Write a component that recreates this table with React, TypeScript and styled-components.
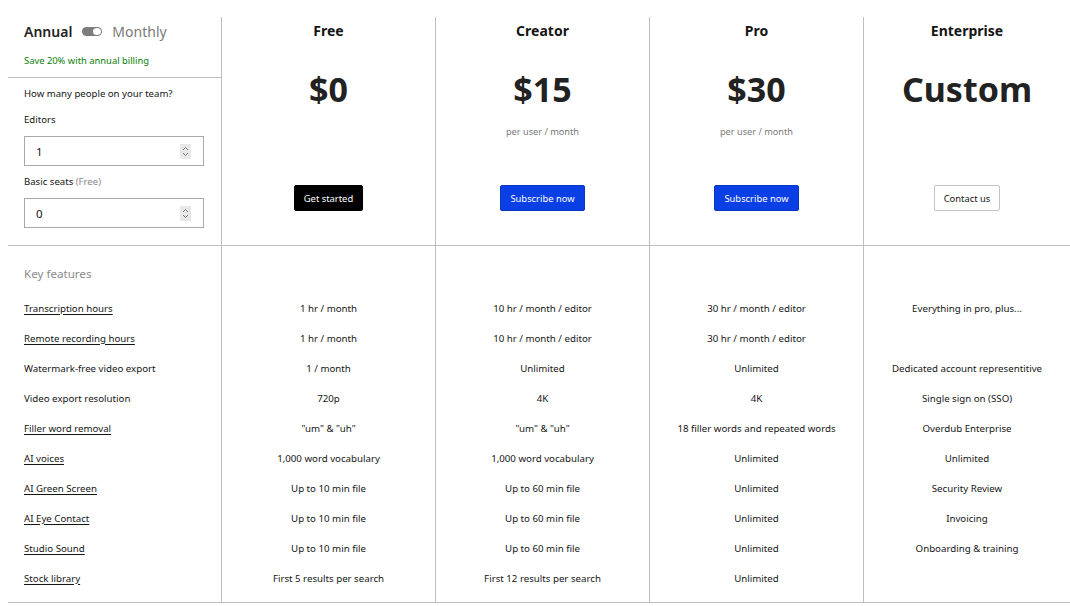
import { FunctionComponent } from 'react';
import styled, { createGlobalStyle } from 'styled-components';

const GlobalStyle = createGlobalStyle`
  * { box-sizing: border-box; }
  body {
    margin: 0;
    background: #ffffff;
    font-family: "Noto Sans", "Open Sans", sans-serif;
    color: #151515;
  }
`;

const Page = styled.div`
  padding: 17px 0 0 8px;
`;

const Table = styled.div`
  display: grid;
  grid-template-columns: 213px 214px 214px 214px 207px;
  border-bottom: 1px solid #bdbdbd;
`;

const HeaderCell = styled.div<{ $divider?: boolean }>`
  height: 229px;
  border-bottom: 1px solid #bdbdbd;
  border-left: ${p => (p.$divider ? '1px solid #bdbdbd' : 'none')};
`;

const BillingBlock = styled.div`
  height: 61px;
  padding: 0 16px;
  border-bottom: 1px solid #bdbdbd;
`;

const ToggleRow = styled.div`
  height: 28px;
  display: flex;
  align-items: center;
  gap: 10px;
  font-size: 14px;
`;

const BillingOption = styled.span<{ $active?: boolean }>`
  font-weight: ${p => (p.$active ? 600 : 400)};
  color: ${p => (p.$active ? '#222222' : '#7a7a7a')};
`;

const Toggle = styled.span`
  width: 20px;
  height: 9px;
  border-radius: 5px;
  background: #7d7d7d;
  display: flex;
  justify-content: flex-end;
  align-items: center;
  padding: 0 1px;
`;

const Knob = styled.span`
  width: 8px;
  height: 7px;
  border-radius: 50%;
  background: #ffffff;
`;

const SaveNote = styled.div`
  margin-top: 9px;
  font-size: 9.4px;
  line-height: 14px;
  color: #0a800a;
`;

const TeamBlock = styled.div`
  padding: 8px 16px 0;
`;

const FieldLabel = styled.div<{ $gap?: number }>`
  font-size: 9.6px;
  line-height: 16px;
  margin-top: ${p => p.$gap ?? 0}px;
`;

const Muted = styled.span`
  color: #8a8a8a;
`;

const NumberBox = styled.div`
  margin-top: 8px;
  height: 30px;
  width: 180px;
  border: 1px solid #a9a9a9;
  display: flex;
  align-items: center;
  padding: 0 12px 0 11px;
`;

const NumberInput = styled.input`
  flex: 1;
  min-width: 0;
  border: none;
  outline: none;
  padding: 0;
  font-family: inherit;
  font-size: 11.5px;
  color: #151515;
  background: transparent;
`;

const Spinner = styled.span`
  width: 11px;
  height: 15px;
  background: #e8e8e8;
  display: flex;
  align-items: center;
  justify-content: center;
`;

const PlanCell = styled(HeaderCell)`
  display: flex;
  flex-direction: column;
  align-items: center;
`;

const PlanName = styled.div`
  margin-top: 4px;
  font-size: 14px;
  line-height: 20px;
  font-weight: 700;
`;

const Price = styled.div`
  margin-top: 26px;
  height: 44px;
  font-size: 34px;
  line-height: 44px;
  font-weight: 700;
  color: #222222;
`;

const PriceNote = styled.div`
  margin-top: 14px;
  height: 14px;
  font-size: 9.2px;
  line-height: 14px;
  color: #7a7a7a;
`;

const variants = {
  dark: { bg: '#000000', color: '#ffffff', border: '#000000' },
  blue: { bg: '#0b3fe6', color: '#ffffff', border: '#0a35c4' },
  outline: { bg: '#ffffff', color: '#151515', border: '#c4c4c4' },
};

type Variant = keyof typeof variants;

const PlanButton = styled.button<{ $variant: Variant }>`
  margin-top: 46px;
  height: 26px;
  padding: 0 9px;
  border-radius: 2px;
  border: 1px solid ${p => variants[p.$variant].border};
  background: ${p => variants[p.$variant].bg};
  color: ${p => variants[p.$variant].color};
  font-family: inherit;
  font-size: 9.4px;
`;

const Cell = styled.div<{ $divider?: boolean; $last?: boolean; $center?: boolean }>`
  height: ${p => (p.$last ? 39 : 30)}px;
  padding: 0 ${p => (p.$center ? 0 : 16)}px ${p => (p.$last ? 9 : 0)}px;
  display: flex;
  align-items: center;
  justify-content: ${p => (p.$center ? 'center' : 'flex-start')};
  border-left: ${p => (p.$divider ? '1px solid #bdbdbd' : 'none')};
  font-size: 9.7px;
  color: #151515;
  white-space: nowrap;
`;

const KeyCell = styled.div<{ $divider?: boolean }>`
  height: 47px;
  padding: 20px 16px 0;
  border-left: ${p => (p.$divider ? '1px solid #bdbdbd' : 'none')};
  font-size: 11.6px;
  line-height: 16px;
  color: #8a8a8a;
`;

const FeatureLink = styled.span<{ $link: boolean }>`
  text-decoration: ${p => (p.$link ? 'underline' : 'none')};
  text-underline-offset: 2px;
`;

interface IPlan {
  name: string;
  price: string;
  note?: string;
  cta: string;
  variant: Variant;
}

const plans: IPlan[] = [
  { name: 'Free', price: '$0', cta: 'Get started', variant: 'dark' },
  { name: 'Creator', price: '$15', note: 'per user / month', cta: 'Subscribe now', variant: 'blue' },
  { name: 'Pro', price: '$30', note: 'per user / month', cta: 'Subscribe now', variant: 'blue' },
  { name: 'Enterprise', price: 'Custom', cta: 'Contact us', variant: 'outline' },
];

const features = [
  { label: 'Transcription hours', link: true, values: ['1 hr / month', '10 hr / month / editor', '30 hr / month / editor', 'Everything in pro, plus...'] },
  { label: 'Remote recording hours', link: true, values: ['1 hr / month', '10 hr / month / editor', '30 hr / month / editor', ''] },
  { label: 'Watermark-free video export', link: false, values: ['1 / month', 'Unlimited', 'Unlimited', 'Dedicated account representitive'] },
  { label: 'Video export resolution', link: false, values: ['720p', '4K', '4K', 'Single sign on (SSO)'] },
  { label: 'Filler word removal', link: true, values: ['"um" & "uh"', '"um" & "uh"', '18 filler words and repeated words', 'Overdub Enterprise'] },
  { label: 'AI voices', link: true, values: ['1,000 word vocabulary', '1,000 word vocabulary', 'Unlimited', 'Unlimited'] },
  { label: 'AI Green Screen', link: true, values: ['Up to 10 min file', 'Up to 60 min file', 'Unlimited', 'Security Review'] },
  { label: 'AI Eye Contact', link: true, values: ['Up to 10 min file', 'Up to 60 min file', 'Unlimited', 'Invoicing'] },
  { label: 'Studio Sound', link: true, values: ['Up to 10 min file', 'Up to 60 min file', 'Unlimited', 'Onboarding & training'] },
  { label: 'Stock library', link: true, values: ['First 5 results per search', 'First 12 results per search', 'Unlimited', ''] },
];

const SpinIcon = () => (
  <svg width="7" height="11" viewBox="0 0 7 11" fill="none" stroke="#777" strokeWidth="1">
    <path d="M1 4 L3.5 1.5 L6 4" />
    <path d="M1 7 L3.5 9.5 L6 7" />
  </svg>
);

const NumberField: FunctionComponent<{ value: number }> = ({ value }) => (
  <NumberBox>
    <NumberInput type="text" defaultValue={value} />
    <Spinner>
      <SpinIcon />
    </Spinner>
  </NumberBox>
);

export default function App() {
  return (
    <Page>
      <GlobalStyle />
      <Table>
        <HeaderCell>
          <BillingBlock>
            <ToggleRow>
              <BillingOption $active>Annual</BillingOption>
              <Toggle>
                <Knob />
              </Toggle>
              <BillingOption>Monthly</BillingOption>
            </ToggleRow>
            <SaveNote>Save 20% with annual billing</SaveNote>
          </BillingBlock>
          <TeamBlock>
            <FieldLabel>How many people on your team?</FieldLabel>
            <FieldLabel $gap={10}>Editors</FieldLabel>
            <NumberField value={1} />
            <FieldLabel $gap={8}>
              Basic seats <Muted>(Free)</Muted>
            </FieldLabel>
            <NumberField value={0} />
          </TeamBlock>
        </HeaderCell>

        {plans.map(plan => (
          <PlanCell key={plan.name} $divider>
            <PlanName>{plan.name}</PlanName>
            <Price>{plan.price}</Price>
            <PriceNote>{plan.note}</PriceNote>
            <PlanButton $variant={plan.variant}>{plan.cta}</PlanButton>
          </PlanCell>
        ))}

        <KeyCell>Key features</KeyCell>
        {plans.map(plan => (
          <KeyCell key={plan.name} $divider />
        ))}

        {features.map((feature, i) => {
          const last = i === features.length - 1;
          return [
            <Cell key={feature.label} $last={last}>
              <FeatureLink $link={feature.link}>{feature.label}</FeatureLink>
            </Cell>,
            ...feature.values.map((value, j) => (
              <Cell key={`${feature.label}-${j}`} $divider $center $last={last}>
                {value}
              </Cell>
            )),
          ];
        })}
      </Table>
    </Page>
  );
}
